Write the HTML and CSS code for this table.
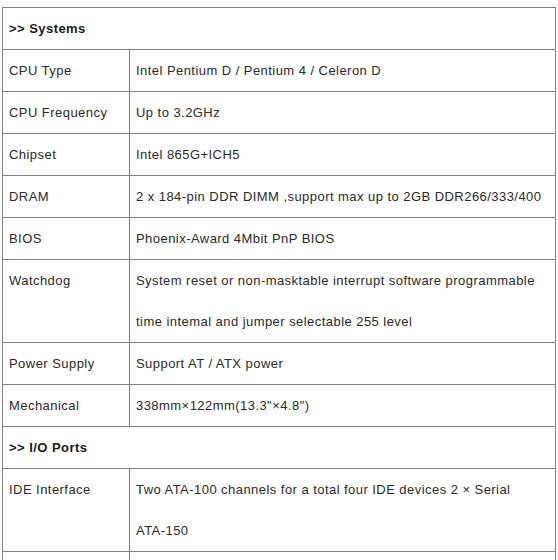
FILE: index.html
```html
<!DOCTYPE html>
<html>
<head>
<meta charset="utf-8">
<link rel="stylesheet" href="styles.css">
</head>
<body>
<table class="spec">
  <colgroup><col class="c1"><col class="c2"></colgroup>
  <tr><td class="head" colspan="2">&gt;&gt; Systems</td></tr>
  <tr><td>CPU Type</td><td>Intel Pentium D / Pentium 4 / Celeron D</td></tr>
  <tr><td>CPU Frequency</td><td>Up to 3.2GHz</td></tr>
  <tr><td>Chipset</td><td>Intel 865G+ICH5</td></tr>
  <tr><td>DRAM</td><td>2 x 184-pin DDR DIMM ,support max up to 2GB DDR266/333/400</td></tr>
  <tr><td>BIOS</td><td>Phoenix-Award 4Mbit PnP BIOS</td></tr>
  <tr><td>Watchdog</td><td>System reset or non-masktable interrupt software programmable time intemal and jumper selectable 255 level</td></tr>
  <tr><td>Power Supply</td><td>Support AT / ATX power</td></tr>
  <tr><td>Mechanical</td><td>338mm×122mm(13.3"×4.8")</td></tr>
  <tr><td class="head" colspan="2">&gt;&gt; I/O Ports</td></tr>
  <tr><td>IDE Interface</td><td>Two ATA-100 channels for a total four IDE devices 2 × Serial <span class="nw">ATA-150</span></td></tr>
  <tr><td>&nbsp;</td><td>&nbsp;</td></tr>
</table>
</body>
</html>
```
FILE: styles.css
```css
html, body { margin: 0; padding: 0; background: #fff; }
body { padding: 7px 0 0 2px; }
.spec {
  border-collapse: collapse;
  width: 554px;
  table-layout: fixed;
  font-family: "Liberation Sans", Arial, sans-serif;
  font-size: 13px;
  letter-spacing: 0.45px;
  color: #2a2a2a;
}
.c1 { width: 127px; }
.spec td {
  border: 1px solid #808080;
  padding: 0 6px;
  line-height: 41px;
  vertical-align: top;
}
.spec td.head { font-weight: bold; color: #1a1a1a; }
.nw { white-space: nowrap; }
```
